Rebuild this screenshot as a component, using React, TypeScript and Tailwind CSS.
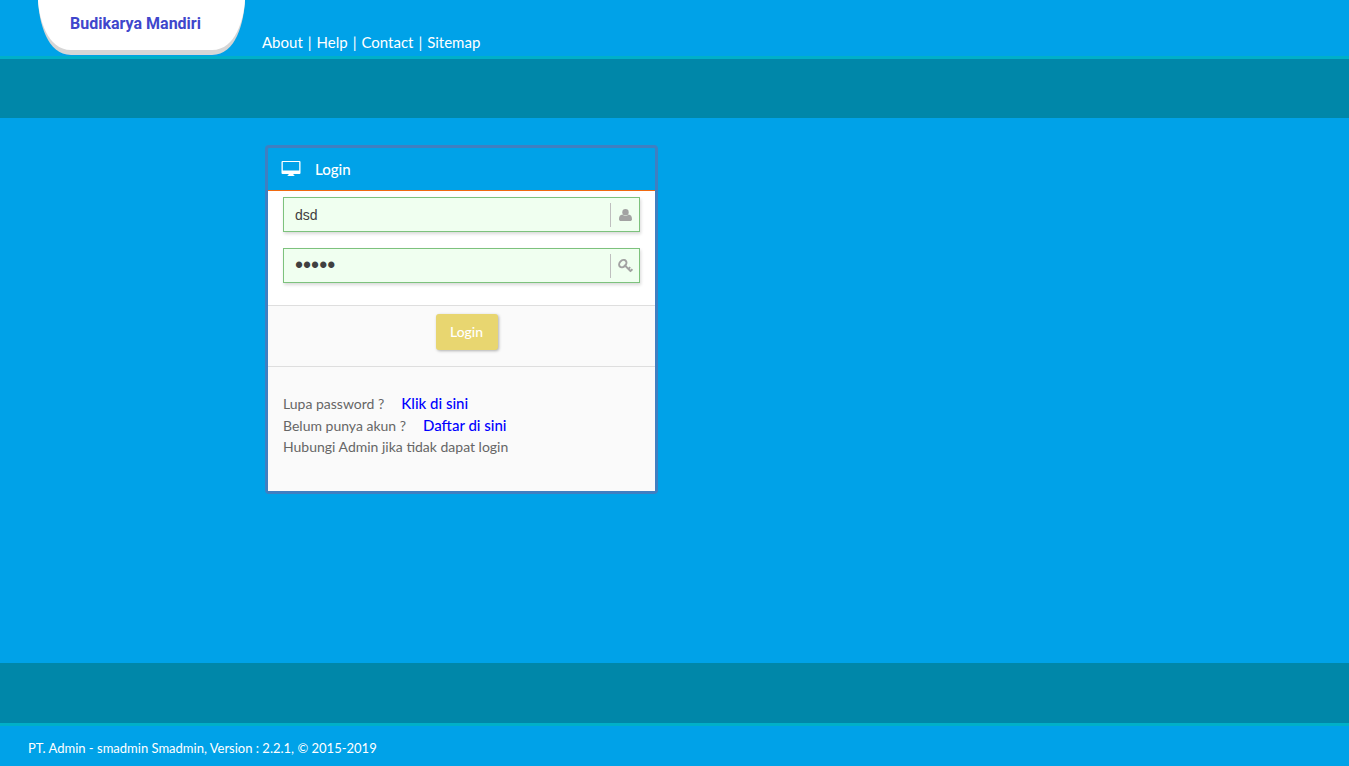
import React from 'react';

const navLinks = ['About', 'Help', 'Contact', 'Sitemap'];

function Logo() {
  return (
    <a href="#" className="relative ml-[38px] block h-[55px] w-[207px] shrink-0">
      <svg viewBox="0 0 207 55" className="absolute inset-0 h-full w-full" aria-hidden="true">
        <path d="M0 0C1 22 9 55 33 55H174C198 55 206 22 207 0Z" fill="#d6d6d6" />
        <path d="M0 0C1 18 9 50 33 50H174C198 50 206 18 207 0Z" fill="#fff" />
      </svg>
      <span className="relative block pt-3 pr-3 text-center font-['Roboto',sans-serif] text-[16px] leading-6 font-bold whitespace-nowrap text-[#4046cc]">
        Budikarya Mandiri
      </span>
    </a>
  );
}

function DesktopIcon() {
  return (
    <svg viewBox="0 0 20 16" className="h-4 w-5 shrink-0" fill="#fff" aria-hidden="true">
      <path
        fillRule="evenodd"
        d="M1.500 0h17A1 1 0 0 1 19.500 1v11a1 1 0 0 1-1 1H12.500v1l1 .5v.5H6.500v-.5l1-.5v-1H1.500a1 1 0 0 1-1-1V1a1 1 0 0 1 1-1ZM1.800 1v8.500h16.400V1Z"
      />
    </svg>
  );
}

function UserIcon() {
  return (
    <svg viewBox="0 0 13 12" className="h-3 w-[13px]" fill="#a2a2a2" aria-hidden="true">
      <circle cx="6.500" cy="3.200" r="3.200" />
      <path d="M3.400 5.600C1.200 5.800 0 7.500 0 10.200 0 11.400.8 12 2 12h9c1.200 0 2-.6 2-1.800 0-2.700-1.200-4.400-3.400-4.600a4.400 4.400 0 0 1-6.200 0Z" />
    </svg>
  );
}

function KeyIcon() {
  return (
    <svg viewBox="0 0 15 14" className="h-[14px] w-[15px]" fill="none" stroke="#a2a2a2" aria-hidden="true">
      <ellipse cx="4.800" cy="4.600" rx="4.100" ry="3.100" strokeWidth="2" transform="rotate(-45 4.800 4.600)" />
      <path d="M6.500 6 13 12.600M10 10.400l2.200-2.200M12.200 12.400l2.200-2.200" strokeWidth="1.900" />
    </svg>
  );
}

function Field(props: {
  label: string;
  type: string;
  value: string;
  textClass: string;
  icon: React.ReactNode;
}) {
  return (
    <div className="flex h-[35px] items-center border border-[#7dc27d] bg-[#f0fff0] shadow-[1px_2px_3px_rgba(0,0,0,0.15)]">
      <input
        aria-label={props.label}
        type={props.type}
        defaultValue={props.value}
        className={`h-full min-w-0 flex-1 bg-transparent px-[11px] font-['Liberation_Sans',Arial,sans-serif] text-[#404040] outline-none ${props.textClass}`}
      />
      <span className="flex h-6 w-[29px] shrink-0 items-center justify-center border-l border-[#bfbfbf]">
        {props.icon}
      </span>
    </div>
  );
}

export default function App() {
  return (
    <div className="flex min-h-screen flex-col bg-[#00a2e8] font-['Lato',sans-serif] text-white">
      <header>
        <div className="flex h-14 gap-[17px]">
          <Logo />
          <nav className="flex items-end gap-[5px] pb-1 text-[15px] leading-5">
            {navLinks.map((name, i) => (
              <React.Fragment key={name}>
                {i > 0 && <span>|</span>}
                <a href="#">{name}</a>
              </React.Fragment>
            ))}
          </nav>
        </div>
        <div className="h-[62px] border-t-[3px] border-[#00b0c8] bg-[#0087a9]" />
      </header>

      <main className="flex-1 px-4 py-[27px] md:pl-[265px]">
        <form
          className="w-full max-w-[393px] rounded-[4px] border-[3px] border-[#3f7fc1]"
          onSubmit={(e) => e.preventDefault()}
        >
          <h1 className="flex h-[43px] items-center gap-[14px] border-b border-[#f06a10] px-[13px] text-[15px] font-medium">
            <DesktopIcon />
            Login
          </h1>
          <div className="flex flex-col gap-4 bg-white px-[15px] pt-[6px] pb-[22px]">
            <Field label="Username" type="text" value="dsd" textClass="text-sm" icon={<UserIcon />} />
            <Field label="Password" type="password" value="admin" textClass="text-[23px]" icon={<KeyIcon />} />
          </div>
          <div className="flex h-[62px] justify-center border-y border-[#dedede] bg-[#fafafa] pt-2 pl-[10px]">
            <button
              type="submit"
              className="h-9 w-[62px] rounded-[3px] bg-[#e8d670] text-sm font-medium text-white shadow-[1px_1px_3px_rgba(0,0,0,0.3)]"
            >
              Login
            </button>
          </div>
          <div className="bg-[#fafafa] px-[15px] pt-[25px] pb-[33px] text-[14px] leading-[22px] text-[#666]">
            <p className="h-[22px]">
              Lupa password ?
              <a href="#" className="ml-[17px] text-[15px] font-medium text-[#0000ff]">
                Klik di sini
              </a>
            </p>
            <p className="h-[22px]">
              Belum punya akun ?
              <a href="#" className="ml-[17px] text-[15px] font-medium text-[#0000ff]">
                Daftar di sini
              </a>
            </p>
            <p>Hubungi Admin jika tidak dapat login</p>
          </div>
        </form>
      </main>

      <footer>
        <div className="h-[63px] border-b-[3px] border-[#00b0c8] bg-[#0087a9]" />
        <p className="h-10 px-7 pt-3 text-[13px] leading-5">
          PT. Admin - smadmin Smadmin, Version : 2.2.1, © 2015-2019
        </p>
      </footer>
    </div>
  );
}
